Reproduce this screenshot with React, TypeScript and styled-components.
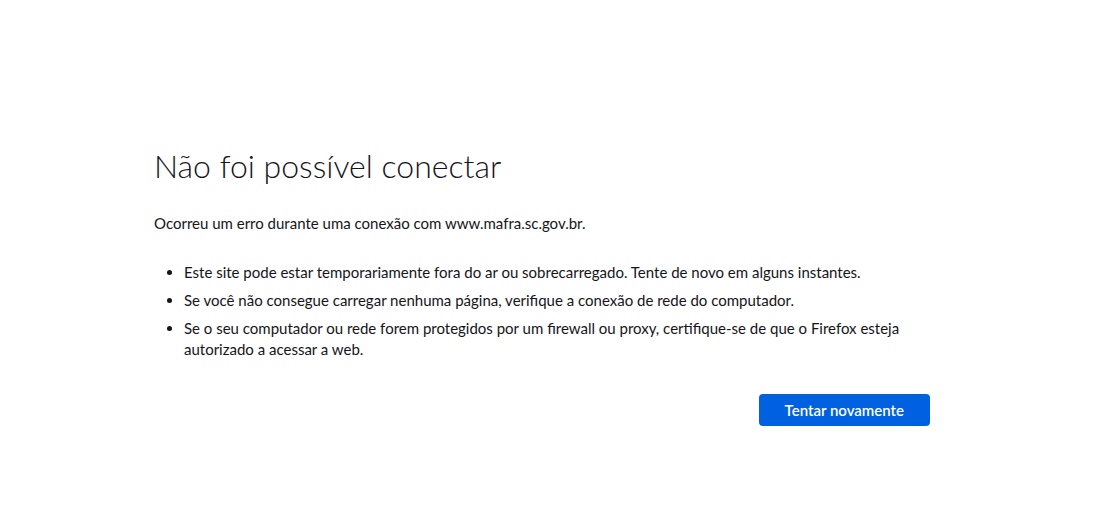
import styled, { createGlobalStyle } from "styled-components";

const GlobalStyle = createGlobalStyle`
  html, body {
    margin: 0;
    padding: 0;
    background: #ffffff;
  }
  body {
    font-family: Lato, "Open Sans", sans-serif;
    color: #15141a;
    font-size: 15px;
  }
`;

const Page = styled.div`
  min-height: 522px;
  display: flex;
  justify-content: center;
  padding: 146px 13px 0 0;
  box-sizing: border-box;
`;

const Container = styled.div`
  width: 776px;
  display: flex;
  flex-direction: column;
`;

const Title = styled.h1`
  margin: 0;
  font-size: 32px;
  line-height: 40px;
  font-weight: 300;
  color: #15141a;
`;

const Message = styled.p`
  margin: 27px 0 0;
  font-size: 15px;
  line-height: 21px;
`;

const Hints = styled.ul`
  margin: 28px 0 0;
  padding: 0 0 0 30px;
  list-style: disc;
`;

const Hint = styled.li`
  font-size: 15px;
  line-height: 21px;
  margin-bottom: 7px;
  &:last-child {
    margin-bottom: 0;
  }
`;

const Actions = styled.div`
  display: flex;
  justify-content: flex-end;
  margin-top: 34px;
`;

const Button = styled.button`
  height: 32px;
  padding: 0 26px;
  border: none;
  border-radius: 4px;
  background: #0061e0;
  color: #ffffff;
  font-family: inherit;
  font-size: 15px;
  font-weight: 600;
  cursor: pointer;
  &:hover {
    background: #0250bb;
  }
`;

const hints = [
  "Este site pode estar temporariamente fora do ar ou sobrecarregado. Tente de novo em alguns instantes.",
  "Se você não consegue carregar nenhuma página, verifique a conexão de rede do computador.",
  "Se o seu computador ou rede forem protegidos por um firewall ou proxy, certifique-se de que o Firefox esteja autorizado a acessar a web.",
];

function App() {
  return (
    <>
      <GlobalStyle />
      <Page>
        <Container>
          <Title>Não foi possível conectar</Title>
          <Message>Ocorreu um erro durante uma conexão com www.mafra.sc.gov.br.</Message>
          <Hints>
            {hints.map((hint) => (
              <Hint key={hint}>{hint}</Hint>
            ))}
          </Hints>
          <Actions>
            <Button>Tentar novamente</Button>
          </Actions>
        </Container>
      </Page>
    </>
  );
}

export default App;
